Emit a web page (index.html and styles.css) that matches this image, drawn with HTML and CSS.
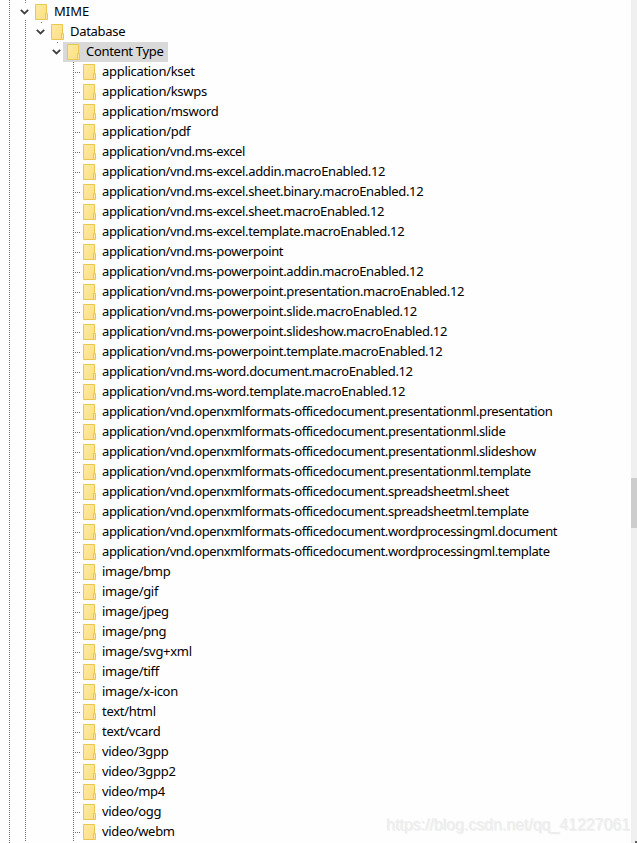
FILE: index.html
```
<!DOCTYPE html>
<html lang="en">

<head>
    <meta charset="utf-8">
    <meta name="viewport" content="width=device-width, initial-scale=1.0">
    <title>MIME</title>
    <link rel="stylesheet" href="styles.css">
</head>

<body>
    <svg class="symbols" width="0" height="0">
        <defs>
            <linearGradient id="fill" x1="0" y1="0" x2="1" y2="1">
                <stop offset="0" stop-color="#ffe9a2"></stop>
                <stop offset="1" stop-color="#fddf85"></stop>
            </linearGradient>
            <symbol id="folder" viewBox="0 0 13 16">
                <path d="M.5 .5h11v15H.5z" fill="url(#fill)" stroke="#eac84f"></path>
                <path d="M10.5 9.5h2v6h-2z" fill="#ffe9a2" stroke="#eac84f"></path>
            </symbol>
            <symbol id="chevron" viewBox="0 0 9 6">
                <path d="M.8 .8l3.7 3.7L8.2 .8" fill="none" stroke="#404040" stroke-width="1.8"></path>
            </symbol>
        </defs>
    </svg>

    <main class="window">
        <ul class="tree">
            <li class="open root">
                <div class="row"><svg class="chevron"><use href="#chevron"></use></svg><span class="node"><svg class="folder"><use href="#folder"></use></svg><span class="name top">MIME</span></span></div>
                <ul>
                    <li class="open">
                        <div class="row child"><svg class="chevron"><use href="#chevron"></use></svg><span class="node"><svg class="folder"><use href="#folder"></use></svg><span class="name">Database</span></span></div>
                        <ul>
                            <li class="open">
                                <div class="row child"><svg class="chevron"><use href="#chevron"></use></svg><span class="node selected"><svg class="folder"><use href="#folder"></use></svg><span class="name">Content Type</span></span></div>
                                <ul id="types" class="leaves"></ul>
                            </li>
                        </ul>
                    </li>
                </ul>
            </li>
        </ul>
        <div class="scrollbar">
            <div class="thumb"></div>
            <div class="grip"></div>
        </div>
        <p class="watermark">https://blog.csdn.net/qq_41227061</p>
    </main>

    <template>
        <li class="row leaf"><span class="node"><svg class="folder"><use href="#folder"></use></svg><span class="name"></span></span></li>
    </template>

    <script>
        const types = [
            "application/kset",
            "application/kswps",
            "application/msword",
            "application/pdf",
            "application/vnd.ms-excel",
            "application/vnd.ms-excel.addin.macroEnabled.12",
            "application/vnd.ms-excel.sheet.binary.macroEnabled.12",
            "application/vnd.ms-excel.sheet.macroEnabled.12",
            "application/vnd.ms-excel.template.macroEnabled.12",
            "application/vnd.ms-powerpoint",
            "application/vnd.ms-powerpoint.addin.macroEnabled.12",
            "application/vnd.ms-powerpoint.presentation.macroEnabled.12",
            "application/vnd.ms-powerpoint.slide.macroEnabled.12",
            "application/vnd.ms-powerpoint.slideshow.macroEnabled.12",
            "application/vnd.ms-powerpoint.template.macroEnabled.12",
            "application/vnd.ms-word.document.macroEnabled.12",
            "application/vnd.ms-word.template.macroEnabled.12",
            "application/vnd.openxmlformats-officedocument.presentationml.presentation",
            "application/vnd.openxmlformats-officedocument.presentationml.slide",
            "application/vnd.openxmlformats-officedocument.presentationml.slideshow",
            "application/vnd.openxmlformats-officedocument.presentationml.template",
            "application/vnd.openxmlformats-officedocument.spreadsheetml.sheet",
            "application/vnd.openxmlformats-officedocument.spreadsheetml.template",
            "application/vnd.openxmlformats-officedocument.wordprocessingml.document",
            "application/vnd.openxmlformats-officedocument.wordprocessingml.template",
            "image/bmp",
            "image/gif",
            "image/jpeg",
            "image/png",
            "image/svg+xml",
            "image/tiff",
            "image/x-icon",
            "text/html",
            "text/vcard",
            "video/3gpp",
            "video/3gpp2",
            "video/mp4",
            "video/ogg",
            "video/webm"
        ];

        const list = document.querySelector("#types");
        const itemTemplate = document.querySelector("template");

        types.forEach((type) => {
            const klon = itemTemplate.content.cloneNode(true);
            const name = klon.querySelector(".name");
            name.textContent = type;
            if (type.includes("openxmlformats")) {
                name.classList.add("long");
            } else if (type.includes("/vnd.")) {
                name.classList.add("vendor");
            }
            list.appendChild(klon);
        });
    </script>
</body>

</html>
```
FILE: styles.css
```
body {
    margin: 0;
    background: #fefefe;
    color: #000;
    font-family: "Noto Sans", sans-serif;
    font-size: 13px;
    letter-spacing: -.3px;
}

.symbols {
    position: absolute;
}

.window {
    position: relative;
    display: flex;
    height: 843px;
    overflow: hidden;
}

ul {
    margin: 0;
    padding: 0;
    list-style: none;
}

/* outermost guide line, one dot every second pixel */
.tree {
    flex: 1;
    margin-left: 9px;
    padding: 2px 0 0 8px;
    background:
        linear-gradient(#808080, #808080) 16px 0 / 1px 1px no-repeat,
        linear-gradient(#808080, #808080) 16px 2px / 1px 1px no-repeat,
        repeating-linear-gradient(#707070 0 1px, transparent 1px 2px) 0 0 / 1px 100% no-repeat;
}

.open > ul {
    padding-left: 16px;
}

.root {
    background: repeating-linear-gradient(#707070 0 1px, transparent 1px 2px) 8px 18px / 1px 100% no-repeat;
}

.open > .leaves {
    padding-left: 24px;
    background: repeating-linear-gradient(#707070 0 1px, transparent 1px 2px) 24px 0 / 1px 100% no-repeat;
}

.row {
    display: flex;
    align-items: center;
    height: 20px;
    white-space: nowrap;
}

/* single dot joining a nested folder to its parent */
.child {
    background: linear-gradient(#707070, #707070) 8px 0 / 1px 1px no-repeat;
}

/* elbow dots between the guide line and the folder */
.leaf {
    padding-left: 6px;
    background: repeating-linear-gradient(90deg, #707070 0 1px, transparent 1px 2px) 2px 10px / 5px 1px no-repeat;
}

.chevron {
    width: 9px;
    height: 6px;
    margin: 0 2px 0 3px;
}

.folder {
    width: 13px;
    height: 16px;
    margin-right: 6px;
}

.node {
    display: flex;
    align-items: center;
    height: 20px;
    padding: 0 4px;
}

.name {
    padding-bottom: 2px;
}

.top {
    letter-spacing: 0;
}

.vendor {
    letter-spacing: -.355px;
}

.long {
    letter-spacing: -.39px;
}

.selected {
    background: #d9d9d9;
}

.scrollbar {
    width: 6px;
    background: #f0f0f0;
    display: flex;
    flex-direction: column;
    align-items: flex-end;
}

.thumb {
    width: 6px;
    height: 50px;
    margin-top: 478px;
    background: #cdcdcd;
}

.grip {
    width: 2px;
    height: 2px;
    margin-top: auto;
    background: #606060;
}

.watermark {
    position: absolute;
    right: 7px;
    bottom: 9px;
    margin: 0;
    color: #ededed;
    font: 16px/18px "Liberation Sans", sans-serif;
    letter-spacing: -.05px;
    text-shadow: 1px 1px 0 #f0f0f0;
}
```
